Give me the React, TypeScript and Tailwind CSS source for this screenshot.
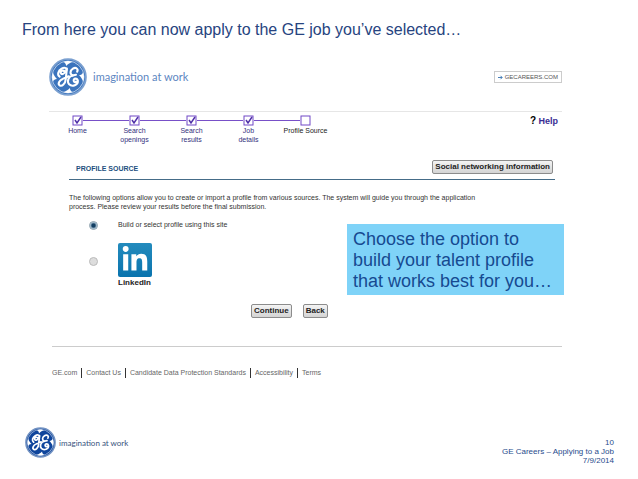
import React from 'react';
import { FaLinkedinIn } from 'react-icons/fa';

interface LogoProps {
  className: string;
  color: string;
  ring: string;
}

const STEPS = [
  { label: 'Home', done: true },
  { label: 'Search openings', done: true },
  { label: 'Search results', done: true },
  { label: 'Job details', done: true },
  { label: 'Profile Source', done: false },
];

const FOOTER_LINKS = ['GE.com', 'Contact Us', 'Candidate Data Protection Standards', 'Accessibility', 'Terms'];

const Monogram: React.FC<LogoProps> = ({ className, color, ring }) => (
  <svg className={className} viewBox="0 0 100 100" fill="none" aria-label="GE" role="img">
    <circle cx="50" cy="50" r="47" fill={color} stroke={ring} strokeWidth="5" />
    <circle cx="50" cy="50" r="42" stroke="#fff" strokeWidth="2" strokeOpacity="0.8" />
    {/* Rim flourishes */}
    <g fill="#fff">
      <path d="M8 52C8 46 9 42 10 38C13 46 17 51 21 55C16 55 12 58 10 62Z" />
      <path d="M48 8C54 8 58 9 62 10C54 13 49 17 45 21C45 16 42 12 38 10Z" />
      <path d="M92 48C92 54 91 58 90 62C87 54 83 49 79 45C84 45 88 42 90 38Z" />
      <path d="M52 92C46 92 42 91 38 90C46 87 51 83 55 79C55 84 58 88 62 90Z" />
    </g>
    {/* Script letters */}
    <g stroke="#fff" strokeWidth="5.5" strokeLinecap="round" strokeLinejoin="round">
      <path d="M28 49C21 44 24 33 33 28C42 23 49 27 45 34C42 41 32 46 31 39C30 33 38 31 42 36" />
      <path d="M47 28L44 56C43 68 34 76 28 72C22 68 28 58 36 55L52 48" />
      <path d="M74 36C78 29 71 23 63 28C55 33 54 43 63 46C52 47 46 61 53 69C61 77 77 71 76 60C74 52 64 53 65 60C66 65 70 64 71 62" />
      <path d="M62 46L71 44" />
    </g>
  </svg>
);

const StepMark: React.FC<{ done: boolean }> = ({ done }) => (
  <svg className="size-[11px] shrink-0" viewBox="0 0 11 11" fill="none" stroke="#7048c6">
    <rect x="1" y="1" width="9" height="9" />
    {done && <path d="M3 5L5 8L9 2" stroke="#5030a8" strokeWidth="1.5" />}
  </svg>
);

const Steps = () => (
  <ol className="flex">
    {STEPS.map((step, i) => (
      <li key={step.label} className="flex w-[57px] flex-col items-center">
        <div className="flex w-full items-center">
          <span className={`h-px flex-1 ${i === 0 ? '' : 'bg-[#7850c8]'}`} />
          <StepMark done={step.done} />
          <span className={`h-px flex-1 ${i === STEPS.length - 1 ? '' : 'bg-[#7850c8]'}`} />
        </div>
        {step.done ? (
          <a href="#" className="w-[30px] text-center text-[7px] leading-[9px] text-[#33307c]">{step.label}</a>
        ) : (
          <span className="text-[7px] leading-[9px] whitespace-nowrap text-[#222]">{step.label}</span>
        )}
      </li>
    ))}
  </ol>
);

const GrayButton: React.FC<{ children: React.ReactNode }> = ({ children }) => (
  <button
    type="button"
    className="h-[14px] rounded-[2px] border border-[#8c8c8c] bg-linear-to-b from-[#f4f4f4] to-[#d4d4d4] px-[2px] text-[8px] leading-[12px] font-bold text-[#222]"
  >
    {children}
  </button>
);

const Radio: React.FC<{ id: string; checked?: boolean }> = ({ id, checked }) => (
  <input
    id={id}
    type="radio"
    name="source"
    defaultChecked={checked}
    className="size-[9px] appearance-none rounded-full border border-[#bbb] bg-[#ddd] checked:border-[#8fa3b0] checked:bg-radial checked:from-[#123f63] checked:from-30% checked:to-[#c5dbe8] checked:to-70%"
  />
);

const CareersPage = () => (
  <main className="relative mt-[18px] mr-[76px] ml-[49px]">
    <header className="flex items-center justify-between border-b border-[#e6e6e6] pb-[15px]">
      <div className="flex items-center gap-[6px]">
        <Monogram className="size-[38px]" color="#3b74bd" ring="#7ba0d0" />
        <span className="font-['Lato'] text-[11px] leading-[14px] text-[#5d86c1]">imagination at work</span>
      </div>
      <a href="#" className="flex items-center gap-[2px] border border-[#ccc] px-[3px] text-[6px] leading-[10px] text-[#555]">
        <svg className="size-[5px]" viewBox="0 0 5 5" fill="none" stroke="#4a80b8">
          <path d="M0 2.5H4M2.5 0.8L4.2 2.5L2.5 4.2" />
        </svg>
        GECAREERS.COM
      </a>
    </header>

    <div className="flex items-start justify-between pt-[3px] pr-[4px]">
      <Steps />
      <a href="#" className="text-[9px] leading-[12px] font-bold text-[#3a2d94]">
        <span className="text-[10px] text-black">?</span> Help
      </a>
    </div>

    <section className="mr-[7px] ml-[20px] mt-[16px]">
      <div className="flex items-center justify-between border-b border-[#456c88] pr-[2px] pb-[5px] pl-[7px]">
        <h2 className="pt-[3px] text-[7px] leading-[9px] font-bold text-[#235080]">PROFILE SOURCE</h2>
        <GrayButton>Social networking information</GrayButton>
      </div>
      <p className="mt-[13px] max-w-[420px] text-[7px] leading-[9px] text-[#333]">
        The following options allow you to create or import a profile from various sources. The system will guide you
        through the application process. Please review your results before the final submission.
      </p>
      <form>
        <div className="mt-[9px] flex items-center gap-[20px] pl-[20px]">
          <Radio id="site" checked />
          <label htmlFor="site" className="text-[7px] leading-[10px] text-[#333]">
            Build or select profile using this site
          </label>
        </div>
        <div className="mt-[13px] flex items-start gap-[20px] pl-[20px]">
          <span className="flex h-9 items-center">
            <Radio id="linkedin" />
          </span>
          <label htmlFor="linkedin" className="text-[8px] leading-[10px] font-bold text-[#222]">
            <span className="mb-[1px] flex size-[34px] items-center justify-center rounded-[2px] bg-linear-to-b from-[#238bbd] to-[#0874ae]">
              <FaLinkedinIn className="size-[28px] text-white" />
            </span>
            LinkedIn
          </label>
        </div>
        <div className="mt-[16px] flex gap-[11px] pl-[182px]">
          <GrayButton>Continue</GrayButton>
          <GrayButton>Back</GrayButton>
        </div>
      </form>
    </section>

    <nav className="mt-[28px] ml-[3px] flex border-t border-[#ccc] pt-[21px] text-[7px] leading-[10px] text-[#666]">
      {FOOTER_LINKS.map((link) => (
        <a key={link} href="#" className="border-l border-[#333] px-[4px] first:border-l-0 first:pl-0">
          {link}
        </a>
      ))}
    </nav>

    <aside className="absolute top-[166px] right-[-2px] w-[217px] bg-[#7fd3f8] px-[6px] pt-[5px] pb-[3px] text-[18px] leading-[21px] text-[#164a91]">
      Choose the option to build your talent profile that works best for you…
    </aside>
  </main>
);

export default function App() {
  return (
    <div className="flex min-h-screen flex-col bg-white font-['Liberation_Sans',sans-serif]">
      <h1 className="pt-[20px] pl-[22px] text-[16px] leading-[20px] text-[#274480]">
        From here you can now apply to the GE job you’ve selected…
      </h1>
      <CareersPage />
      <footer className="mt-auto flex items-start justify-between pr-[24px] pb-[14px] pl-[25px]">
        <div className="flex items-center gap-[3px]">
          <Monogram className="size-[31px]" color="#0f459c" ring="#7292c2" />
          <span className="font-['Lato'] text-[8px] leading-[10px] text-[#38547e]">imagination at work</span>
        </div>
        <div className="pt-[11px] text-right text-[8px] leading-[9px] text-[#284c8c]">
          <p>10</p>
          <p>GE Careers – Applying to a Job</p>
          <p>7/9/2014</p>
        </div>
      </footer>
    </div>
  );
}
